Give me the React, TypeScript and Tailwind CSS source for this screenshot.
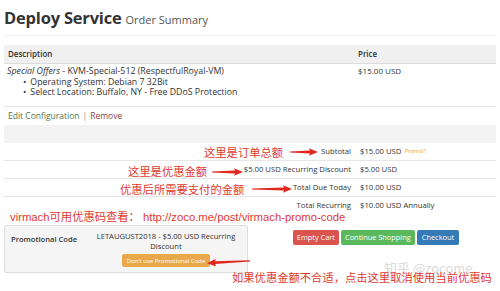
import React from "react";

const note = "whitespace-nowrap text-[11.3px] leading-[16px] text-[#e03a2e] font-['Liberation_Sans','Noto_Sans_CJK_SC',sans-serif]";

function Arrow ({ length, left = false }: { length: number; left?: boolean; })
{
  const L = length;
  return (
    <svg width={L} height={8} viewBox={`0 0 ${L} 8`} className={left ? "-scale-x-100" : ""}>
      <path d={`M0 3.4 L${L - 8} 2.6 L${L - 9} 0.2 L${L} 4 L${L - 9} 7.8 L${L - 8} 5.4 L0 4.6 Z`} fill="#e0281f" />
    </svg>
  );
}

function TotalRow ({ label, value, extra, last = false }: { label: string; value: string; extra?: string; last?: boolean; })
{
  return (
    <div className={`flex h-[18px] items-center text-[7.7px] ${last ? "" : "border-b border-[#e6e6e6]"}`}>
      <div className="w-[350px] pr-[3px] text-right">{label}</div>
      <div className="flex-1 pl-[6px] flex items-center gap-[3px]">
        <span>{value}</span>
        {extra && <span className="text-[6px] text-[#e8a33d]">{extra}</span>}
      </div>
    </div>
  );
}

export default function App ()
{
  return (
    <div className="relative w-[500px] h-[291px] overflow-hidden bg-white font-['Open_Sans',sans-serif] text-[8px] text-[#333]">
      <div className="px-[4px]">
        {/* heading */}
        <div className="h-[36px] border-b border-[#f0f0f0] pt-[8px]">
          <span className="text-[16.5px] leading-[20px] font-bold tracking-[-0.2px] text-[#333]">Deploy Service</span>
          <span className="ml-[4px] text-[11px] leading-[20px] text-[#555]">Order Summary</span>
        </div>

        {/* table */}
        <div className="mt-[9px]">
          <div className="flex h-[19px] items-center bg-[#f0f0f0] border-b border-[#dcdcdc] font-semibold">
            <div className="w-[350px] pl-[4px]">Description</div>
            <div className="flex-1 pl-[4px]">Price</div>
          </div>
          <div className="flex h-[43px] border-b border-[#e6e6e6] pt-[2px] leading-[10.5px]">
            <div className="w-[350px] pl-[3px] text-[8.8px]">
              <div><em>Special Offers</em> - KVM-Special-512 (RespectfulRoyal-VM)</div>
              <div className="flex pl-[16px] gap-[4px]"><span>•</span><span>Operating System: Debian 7 32Bit</span></div>
              <div className="flex pl-[16px] gap-[4px]"><span>•</span><span>Select Location: Buffalo, NY - Free DDoS Protection</span></div>
            </div>
            <div className="flex-1 pl-[4px]">$15.00 USD</div>
          </div>
          <div className="flex h-[18px] items-center pl-[4px] text-[8.5px]">
            <span className="text-[#4d7a4d]">Edit Configuration</span>
            <span className="mx-[3px] text-[#999]">|</span>
            <span className="text-[#8a4646]">Remove</span>
          </div>
          <div className="h-[18px] bg-[#f3f3f3]"></div>
          <TotalRow label="Subtotal" value="$15.00 USD" extra="Promo?" />
          <TotalRow label="$5.00 USD Recurring Discount" value="$5.00 USD" />
          <TotalRow label="Total Due Today" value="$10.00 USD" />
          <TotalRow label="Total Recurring" value="$10.00 USD Annually" last />
        </div>

        {/* promo + actions */}
        <div className="mt-[10px] flex items-start">
          <div className="flex h-[48px] w-[244px] rounded-[2px] border border-[#dedede] bg-[#f5f5f5] text-[7.6px]">
            <div className="w-[80px] pl-[6px] pt-[8px] font-semibold">Promotional Code</div>
            <div className="flex flex-1 flex-col items-center pt-[5px] leading-[10px] text-center">
              <div>LETAUGUST2018 - $5.00 USD Recurring</div>
              <div>Discount</div>
              <button className="mt-[3px] h-[13px] rounded-[2px] bg-[#e9a94a] px-[5px] text-[6px] text-white">Don't use Promotional Code</button>
            </div>
          </div>
          <div className="flex flex-1 justify-center gap-[2px] pt-[5px] pl-[8px]">
            <button className="h-[15px] rounded-[2px] bg-[#d9534f] px-[4px] text-[7.4px] text-white">Empty Cart</button>
            <button className="h-[15px] rounded-[2px] bg-[#5cb85c] px-[4px] text-[7.4px] text-white">Continue Shopping</button>
            <button className="h-[15px] rounded-[2px] bg-[#337ab7] px-[5px] text-[7.4px] text-white">Checkout</button>
          </div>
        </div>
      </div>

      {/* annotations drawn over the screenshot */}
      <div className={`absolute left-[204px] top-[145px] ${note}`}>这里是订单总额</div>
      <div className="absolute left-[290px] top-[148px]"><Arrow length={28} /></div>

      <div className={`absolute left-[128px] top-[164px] ${note}`}>这里是优惠金额</div>
      <div className="absolute left-[212px] top-[168px]"><Arrow length={31} /></div>

      <div className={`absolute left-[120px] top-[182px] ${note}`}>优惠后所需要支付的金额</div>
      <div className="absolute left-[252px] top-[185px]"><Arrow length={40} /></div>

      <div className={`absolute left-[10px] top-[209px] ${note}`}>virmach可用优惠码查看：&nbsp;http://zoco.me/post/virmach-promo-code</div>

      <div className="absolute left-[207px] top-[258px] -rotate-3"><Arrow length={43} left /></div>

      <div className="absolute left-[384px] top-[259px] whitespace-nowrap text-[13px] leading-[18px] text-[#dadada] font-['Noto_Sans_CJK_SC',sans-serif]">知乎 @zocome</div>

      <div className={`absolute left-[232px] top-[270px] ${note}`}>如果优惠金额不合适，点击这里取消使用当前优惠码</div>
    </div>
  );
}
